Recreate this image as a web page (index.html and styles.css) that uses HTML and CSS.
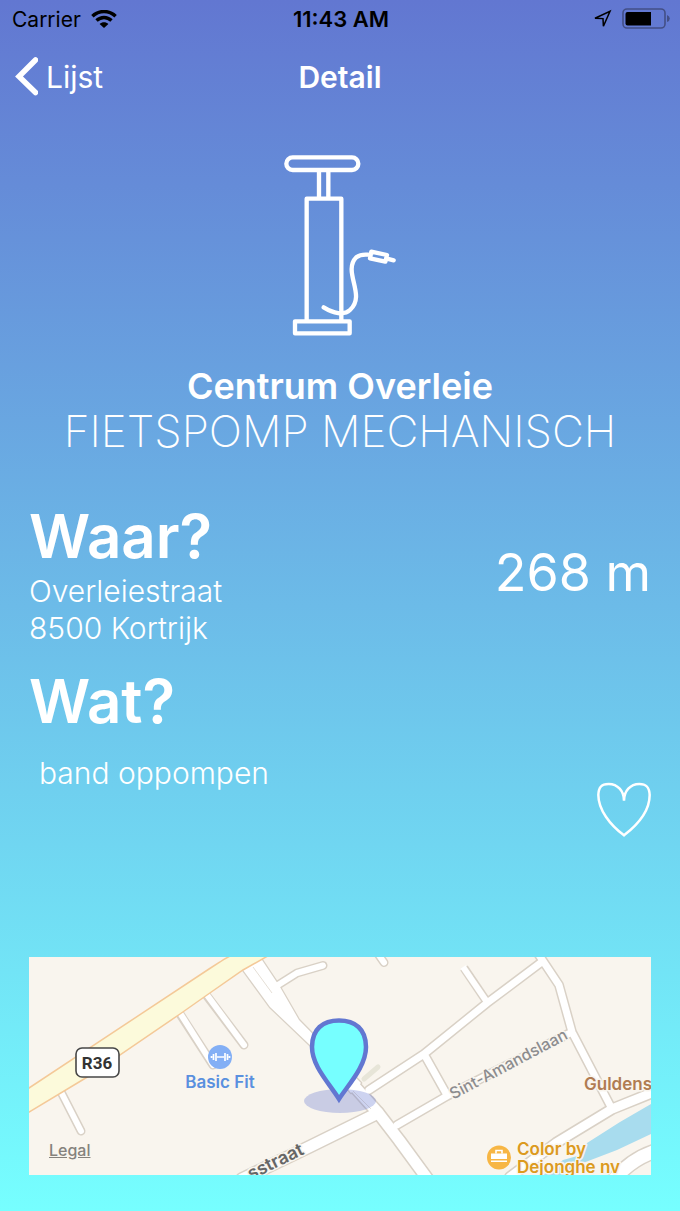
FILE: index.html
```html
<!DOCTYPE html>
<html lang="nl">
<head>
<meta charset="utf-8">
<meta name="viewport" content="width=device-width, initial-scale=1">
<title>Detail</title>
<link rel="stylesheet" href="styles.css">
</head>
<body>
<div class="status">
  <div class="status-left">
    <span>Carrier</span>
    <svg class="wifi" width="26" height="19" viewBox="0 0 26 19" aria-hidden="true">
      <g fill="none" stroke="#000" stroke-width="3.4">
        <path d="M1.4 6.200C8 -.1 18 -.1 24.6 6.200"/>
        <path d="M5.5 10.600C10 6.400 16 6.400 20.5 10.600"/>
      </g>
      <path d="M8.6 14C11 11.800 15 11.800 17.4 14L13 18Z"/>
    </svg>
  </div>
  <span class="status-time">11:43 AM</span>
  <div class="status-right">
    <svg width="20" height="20" viewBox="0 0 20 20" aria-hidden="true">
      <path d="M3 9.200L18 2.200L11.400 17.200L11 9.600Z" fill="none" stroke="#000" stroke-width="1.5"/>
    </svg>
    <svg width="48" height="22" viewBox="0 0 48 22" aria-hidden="true">
      <rect x="1" y="1" width="42" height="19" rx="4" fill="none" stroke="#434f86" stroke-width="1.6"/>
      <path d="M5.5 4H29V17.500H5.500Q3.500 17.500 3.500 15.500V6Q3.500 4 5.500 4Z"/>
      <path d="M45 7Q47.800 8 47.800 10.500T45 14Z" fill="#434f86"/>
    </svg>
  </div>
</div>
<header class="nav">
  <a class="back" href="#">
    <svg width="24" height="40" viewBox="0 0 24 40" aria-hidden="true">
      <path d="M21.500 3L5 19.500L21.500 35.500" fill="none" stroke="#fff" stroke-width="5.500" stroke-linecap="round"/>
    </svg>
    <span>Lijst</span>
  </a>
  <h1 class="nav-title">Detail</h1>
</header>
<main class="detail">
  <svg class="pump" width="140" height="200" viewBox="0 0 420 600" role="img" aria-label="Fietspomp">
    <g fill="none" stroke="#fff" stroke-width="13" stroke-linejoin="round" stroke-linecap="round">
      <rect x="49" y="37" width="216" height="38" rx="19"/>
      <path d="M147 76V158M175 76V158"/>
      <path d="M110 524V161H214V524"/>
      <rect x="75" y="529" width="164" height="36"/>
      <path d="M161 487C190 505 222 512 240 495C290 450 216 380 259 337Q272 327 294 329"/>
      <path d="M304 320L351 330L346 350L300 340ZM351 341L371 346"/>
    </g>
  </svg>
  <h2 class="name">Centrum Overleie</h2>
  <p class="kind">FIETSPOMP MECHANISCH</p>
  <section class="row">
    <div>
      <h3 class="heading">Waar?</h3>
      <address class="text">Overleiestraat<br>8500 Kortrijk</address>
    </div>
    <p class="distance">268 m</p>
  </section>
  <section class="row row-what">
    <div>
      <h3 class="heading">Wat?</h3>
      <ul class="text services"><li>band oppompen</li></ul>
    </div>
    <button class="favorite" type="button" aria-label="Favoriet">
      <svg width="56" height="56" viewBox="0 0 168 168" aria-hidden="true">
        <path d="M87 59C87 30 68 9 41 9C18 9 11 20 10 42C10 86 45 132 87 163C130 130 164 88 164 42C163 20 155 9 133 9C106 9 87 30 87 59Z" fill="none" stroke="#fff" stroke-width="7.500"/>
      </svg>
    </button>
  </section>
  <div class="map">
    <svg class="map-canvas" viewBox="0 0 622 218" preserveAspectRatio="xMidYMid slice" role="img" aria-label="Kaart van Overleiestraat">
      <rect width="622" height="218" fill="#f9f5ee"/>
      <path d="M622 147L591 165L558 186L552 198L534 203L514 218H540L554 206L588 193L622 177Z" fill="#a8dcee"/>
      <g class="road-edge">
        <path d="M32 135L52 174" stroke-width="9"/>
        <path d="M151 57L184 108M178 39L215 88" stroke-width="9"/>
        <path d="M249 28L268 16L294 8.500M347 -6L355 5.500" stroke-width="9"/>
        <path d="M435 11L458 45" stroke-width="9" stroke-linecap="butt"/>
        <path d="M340 133L395 97L458 46L514 4M506 -8L530 28L543 75L583 152M395 97L418 138M368 168L418 139L541 76" stroke-width="10"/>
        <path d="M630 133L583 152L527 186L481 220" stroke-width="12"/>
        <path d="M630 193Q602 201 584 224" stroke-width="16"/>
        <path d="M213 222L280 190L349 156" stroke-width="14"/>
        <path d="M326 130L350 157L370 183L400 224" stroke-width="14"/>
        <path d="M214 13L241 50L282 89L322 136L332 126L270 63L251 30L231 0L222 -4Z" stroke-width="2.500"/>
      </g>
      <path d="M335 122L349 110" stroke="#e7e5d8" stroke-width="5" stroke-linecap="round"/>
      <g class="road">
        <path d="M31 133L52 174" stroke-width="6"/>
        <path d="M151 56L184 108M178 38L215 88" stroke-width="6"/>
        <path d="M249 28L268 16L294 8.500M347 -6L355 5.500" stroke-width="6"/>
        <path d="M434 10L458 45" stroke-width="6" stroke-linecap="butt"/>
        <path d="M340 133L395 97L458 46L514 4M506 -8L530 28L543 75L583 152M395 97L418 138M368 168L418 139L541 76" stroke-width="7"/>
        <path d="M630 133L583 152L527 186L481 220" stroke-width="9"/>
        <path d="M630 193Q602 201 584 224" stroke-width="13"/>
        <path d="M213 222L280 190L349 156" stroke-width="11"/>
        <path d="M326 130L350 157L370 183L400 224" stroke-width="11"/>
      </g>
      <path d="M214 13L241 50L282 89L322 136L332 126L270 63L251 30L231 0L222 -4Z" fill="#fff"/>
      <path d="M224 10L243 36M324 134L342 152" fill="none" stroke="#e5dfd6" stroke-width="1"/>
      <path d="M-3 133L180 12L191 5Q198 0 208 -4H244L214 13L178 38L151 57L60 119L-3 157Z" fill="#fcfadb" stroke="#f4c998" stroke-width="1.500"/>
      <text class="label label-gray" transform="translate(482 112) rotate(-28)" font-size="16" text-anchor="middle">Sint-Amandslaan</text>
      <text class="label label-road" transform="translate(222 223) rotate(-26)" font-size="18">sstraat</text>
      <rect x="47" y="91" width="43" height="29" rx="6" fill="#fff" stroke="#474747" stroke-width="1.600"/>
      <text class="shield" x="68" y="112" font-size="17" text-anchor="middle">R36</text>
      <circle cx="191" cy="100" r="12" fill="#83aff5"/>
      <path d="M188 100H195M187 96V104M196 96V104M184.500 97V103M198.500 97V103M182.500 99V101M200.500 99V101" stroke="#fff" stroke-width="1.700"/>
      <text class="label label-blue" x="191" y="131" font-size="17" text-anchor="middle">Basic Fit</text>
      <text class="label label-brown" x="555" y="133" font-size="17">Guldens</text>
      <circle cx="470" cy="200.500" r="12" fill="#f7b644"/>
      <path d="M462 196.500H478V202H462ZM462 203.500H478V205H462Z" fill="#fff"/>
      <path d="M467 196.500V193.500H473V196.500" fill="none" stroke="#fff" stroke-width="1.600"/>
      <g class="label label-orange" font-size="17">
        <text x="488" y="198">Color by</text>
        <text x="488" y="216">Dejonghe nv</text>
      </g>
      <ellipse cx="311" cy="144" rx="36" ry="12" fill="#6277d1" fill-opacity=".32"/>
      <path d="M310 142C300 126 283 109 283 90C283 72 294 63.500 310 63.500S337 72 337 90C337 109 320 127 310 142Z" fill="#76ffff" stroke="#6277d1" stroke-width="4.500"/>
    </svg>
    <a class="legal" href="#">Legal</a>
  </div>
</main>
</body>
</html>
```
FILE: styles.css
```css
* {
  box-sizing: border-box;
}

body {
  margin: 0;
  min-height: 100vh;
  color: #fff;
  font-family: Inter, "Liberation Sans", sans-serif;
  background: linear-gradient(#6277d1, #76ffff);
}

h1, h2, h3, p, ul {
  margin: 0;
  padding: 0;
}

svg {
  display: block;
}

.status {
  display: grid;
  grid-template-columns: 1fr auto 1fr;
  align-items: center;
  height: 38px;
  padding: 0 10px 0 12px;
  color: #000;
  font-size: 21px;
}

.status-left,
.status-right {
  display: flex;
  align-items: center;
  gap: 10px;
}

.status-right {
  justify-content: flex-end;
}

.status-time {
  font-size: 22px;
  font-weight: 600;
}

.nav {
  display: grid;
  grid-template-columns: 1fr auto 1fr;
  align-items: center;
  height: 77px;
  padding: 0 14px;
}

.back {
  display: flex;
  align-items: center;
  gap: 8px;
  color: #fff;
  font-size: 30px;
  text-decoration: none;
}

.nav-title {
  font-size: 30px;
  font-weight: 600;
}

.detail {
  padding: 30px 29px 36px;
}

.pump {
  margin: 0 auto;
}

.name {
  margin-top: 20px;
  font-size: 36px;
  font-weight: 600;
  line-height: 42px;
  text-align: center;
}

.kind {
  font-size: 44px;
  font-weight: 200;
  line-height: 48px;
  text-align: center;
  white-space: nowrap;
}

.row {
  display: flex;
  justify-content: space-between;
  margin-top: 44px;
}

.row-what {
  align-items: flex-end;
  margin-top: 17px;
}

.heading {
  font-size: 60px;
  font-weight: 600;
  line-height: 74px;
}

.text {
  font-size: 30px;
  font-style: normal;
  font-weight: 300;
  line-height: 37px;
}

.services {
  margin: 17px 0 45px 10px;
  list-style: none;
}

.distance {
  align-self: center;
  font-size: 52px;
  line-height: 64px;
}

.favorite {
  padding: 0;
  border: 0;
  background: none;
  cursor: pointer;
}

.map {
  position: relative;
  height: 218px;
  margin-top: 120px;
  overflow: hidden;
}

.map-canvas {
  width: 100%;
  height: 100%;
}

.road-edge,
.road {
  fill: none;
  stroke-linecap: round;
  stroke-linejoin: round;
}

.road-edge {
  stroke: #d9d1c6;
}

.road {
  stroke: #fff;
}

.label {
  font-weight: 600;
  paint-order: stroke;
  stroke: #f9f5ee;
  stroke-width: 3px;
  stroke-linejoin: round;
}

.label-gray {
  fill: #8c8c8e;
  font-weight: 500;
}

.label-road {
  fill: #666;
}

.label-blue {
  fill: #5a90df;
}

.label-brown {
  fill: #b07c52;
}

.label-orange {
  fill: #dc9a20;
}

.shield {
  fill: #333;
  font-family: Roboto, sans-serif;
  font-weight: 700;
}

.legal {
  position: absolute;
  bottom: 15px;
  left: 20px;
  color: #85827d;
  font-size: 16px;
  font-weight: 500;
}
```
